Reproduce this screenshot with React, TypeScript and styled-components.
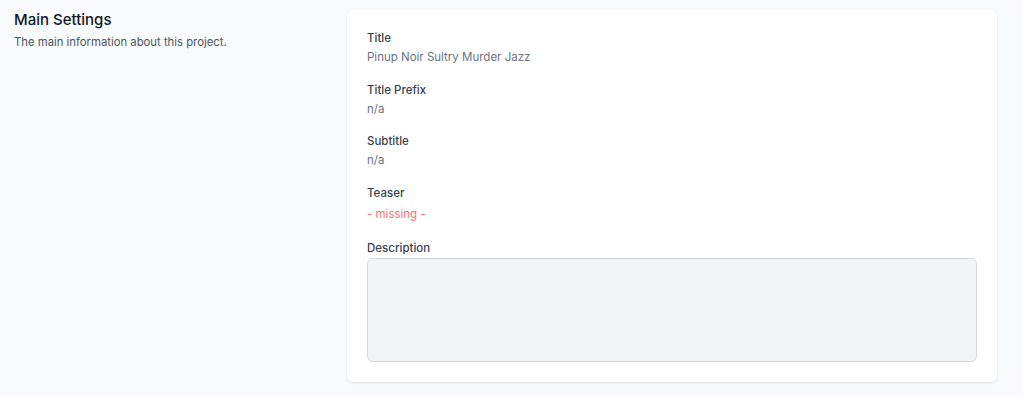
import React from 'react';
import styled, { createGlobalStyle } from 'styled-components';

const fields = [
    { label: 'Title', value: 'Pinup Noir Sultry Murder Jazz' },
    { label: 'Title Prefix', value: 'n/a' },
    { label: 'Subtitle', value: 'n/a' },
    { label: 'Teaser', value: '- missing -', missing: true },
];

const App = () => {
    return (
        <>
            <GlobalStyle />
            <Page>
                <Intro>
                    <Heading>Main Settings</Heading>
                    <Lead>The main information about this project.</Lead>
                </Intro>
                <Card>
                    {fields.map((f) => (
                        <Field key={f.label}>
                            <Label>{f.label}</Label>
                            <Value $missing={f.missing}>{f.value}</Value>
                        </Field>
                    ))}
                    <Field $spaced>
                        <Label>Description</Label>
                        <TextBox readOnly />
                    </Field>
                </Card>
            </Page>
        </>
    );
};

export default App;

const GlobalStyle = createGlobalStyle`
    html, body {
        margin: 0;
        background: #f9fafb;
        font-family: Inter, "Noto Sans", sans-serif;
    }
`;

const Page = styled.div`
    display: flex;
    align-items: flex-start;
    padding: 10px 26px 15px 14px;
    min-height: 396px;
    box-sizing: border-box;
`;

const Intro = styled.div`
    width: 333px;
    flex-shrink: 0;
    padding-top: 1px;
`;

const Heading = styled.h2`
    margin: 0;
    font-size: 15px;
    font-weight: 500;
    line-height: 18px;
    color: #111827;
`;

const Lead = styled.p`
    margin: 5px 0 0;
    font-size: 11.3px;
    line-height: 16px;
    color: #4b5563;
`;

const Card = styled.div`
    flex: 1;
    background: #fff;
    border-radius: 6px;
    box-shadow: 0 1px 3px rgba(0, 0, 0, 0.08), 0 1px 2px rgba(0, 0, 0, 0.04);
    padding: 20px 20px 20px;
    display: flex;
    flex-direction: column;
    gap: 14.5px;
`;

const Field = styled.div<{ $spaced?: boolean }>`
    display: flex;
    flex-direction: column;
    gap: 1px;
    margin-top: ${(p) => (p.$spaced ? '2px' : '0')};
`;

const Label = styled.div`
    font-size: 11.5px;
    font-weight: 500;
    line-height: 16px;
    color: #374151;
`;

const Value = styled.div<{ $missing?: boolean }>`
    font-size: 11.5px;
    line-height: 20px;
    margin-top: ${(p) => (p.$missing ? '2px' : '0')};
    color: ${(p) => (p.$missing ? '#f87171' : '#6b7280')};
`;

const TextBox = styled.textarea`
    margin-top: 1px;
    height: 104px;
    box-sizing: border-box;
    background: #f3f4f6;
    border: 1px solid #d1d5db;
    border-radius: 6px;
    resize: none;
    outline: none;
    font-family: inherit;
`;
